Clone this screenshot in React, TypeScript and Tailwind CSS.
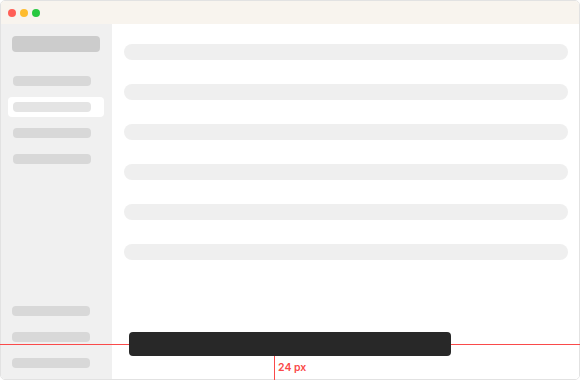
export default function App() {
  const navItems = [1, 2, 3, 4];
  const rows = [1, 2, 3, 4, 5, 6];

  return (
    <div className="relative w-[580px] h-[380px] bg-white font-['Inter',sans-serif]">
      {/* window */}
      <div className="flex flex-col w-full h-full border border-[#e2e2e2] rounded-[5px] overflow-hidden">
        {/* title bar */}
        <div className="flex items-center gap-1 h-[23px] pl-[7px] bg-[#f8f4ee] shrink-0">
          <span className="w-2 h-2 rounded-full bg-[#ff5f57]" />
          <span className="w-2 h-2 rounded-full bg-[#febc2e]" />
          <span className="w-2 h-2 rounded-full bg-[#28c840]" />
        </div>

        <div className="flex flex-1">
          {/* sidebar */}
          <div className="flex flex-col w-[111px] bg-[#f0f0f0] pt-3 pb-[11px]">
            <div className="ml-[11px] w-[88px] h-4 rounded bg-[#cccccc]" />
            <div className="flex flex-col gap-[6px] mt-[19px]">
              {navItems.map((id) => (
                <div
                  key={id}
                  className={
                    id === 2
                      ? "flex items-center ml-[7px] w-[96px] h-5 rounded bg-white pl-[5px]"
                      : "flex items-center ml-[7px] w-[96px] h-5 pl-[5px]"
                  }
                >
                  <div
                    className={
                      id === 2
                        ? "w-[78px] h-[10px] rounded bg-[#e4e4e4]"
                        : "w-[78px] h-[10px] rounded bg-[#d8d8d8]"
                    }
                  />
                </div>
              ))}
            </div>
            <div className="flex flex-col gap-4 mt-auto ml-[11px]">
              <div className="w-[78px] h-[10px] rounded bg-[#d8d8d8]" />
              <div className="w-[78px] h-[10px] rounded bg-[#d8d8d8]" />
              <div className="w-[78px] h-[10px] rounded bg-[#d8d8d8]" />
            </div>
          </div>

          {/* content */}
          <div className="flex flex-col flex-1 gap-6 pt-5 pl-3 pr-[11px] bg-white">
            {rows.map((id) => (
              <div key={id} className="h-4 rounded-full bg-[#efefef]" />
            ))}
          </div>
        </div>
      </div>

      {/* measurement overlay */}
      <div className="absolute left-0 right-0 top-[344px] h-px bg-[#fa4a4a]" />
      <div className="absolute left-[129px] top-[332px] w-[322px] h-6 rounded bg-[#282828]" />
      <div className="absolute left-[274px] top-[356px] w-px h-6 bg-[#fa4a4a]" />
      <div className="absolute left-[278px] top-[361px] text-[10.5px] leading-[14px] font-semibold text-[#fa4a4a]">
        24 px
      </div>
    </div>
  );
}
